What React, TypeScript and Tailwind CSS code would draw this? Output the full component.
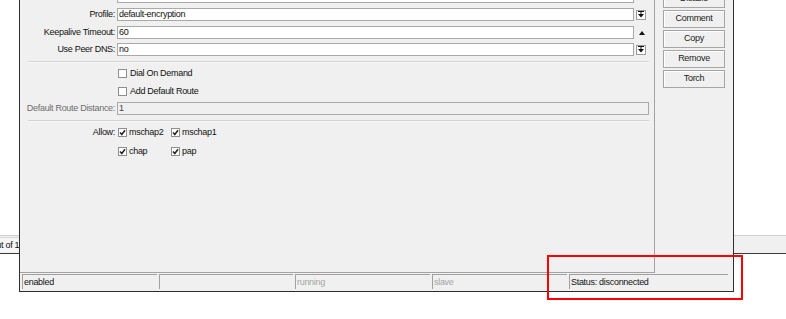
const FONT = "font-['Liberation_Sans',Arial,sans-serif]";

function DropButton() {
  return (
    <div className="ml-[2px] flex h-[10px] w-[10px] items-center justify-center border border-[#9c9c9c] bg-white">
      <svg width="6" height="7" viewBox="0 0 6 7">
        <rect x="0" y="0" width="6" height="1" fill="#111" />
        <rect x="2.5" y="1" width="1" height="2" fill="#111" />
        <path d="M0 3 H6 L3 6.5 Z" fill="#111" />
      </svg>
    </div>
  );
}

function UpArrow() {
  return (
    <div className="ml-[5px] flex h-[10px] w-[6px] items-center">
      <svg width="6" height="4" viewBox="0 0 6 4">
        <path d="M0 4 H6 L3 0 Z" fill="#111" />
      </svg>
    </div>
  );
}

function CheckBox({ checked }: { checked?: boolean }) {
  return (
    <div className="flex h-[9px] w-[9px] shrink-0 items-center justify-center border border-[#8e8f8f] bg-white">
      {checked && (
        <svg width="7" height="7" viewBox="0 0 7 7">
          <path d="M1 3.5 L2.8 5.5 L6 1.2" stroke="#222" strokeWidth="1.5" fill="none" />
        </svg>
      )}
    </div>
  );
}

type FieldRowProps = {
  label: string;
  value: string;
  className?: string;
  after?: React.ReactNode;
};

function FieldRow({ label, value, className, after }: FieldRowProps) {
  return (
    <div className={`flex h-[13px] items-center ${className ?? ''}`}>
      <div className="w-[95px] text-right">{label}</div>
      <div className="ml-[2px] flex h-[13px] w-[517px] items-center border border-[#a9a9a9] bg-white px-[1px]">
        {value}
      </div>
      {after}
    </div>
  );
}

function CheckRow({ label, className }: { label: string; className?: string }) {
  return (
    <div className={`flex h-[13px] items-center pl-[98px] ${className ?? ''}`}>
      <CheckBox />
      <span className="ml-[3px]">{label}</span>
    </div>
  );
}

function AllowItem({ label }: { label: string }) {
  return (
    <div className="flex w-[53px] items-center">
      <CheckBox checked />
      <span className="ml-[2px]">{label}</span>
    </div>
  );
}

function Separator({ className }: { className?: string }) {
  return <div className={`ml-[8px] h-[2px] w-[621px] border-t border-[#d3d3d3] bg-[#f9f9f9] ${className ?? ''}`} />;
}

function SideButton({ label }: { label: string }) {
  return (
    <div className="flex h-[18px] w-[62px] items-center justify-center border border-[#a5a5a5] bg-[#f0f0f0] text-[#1b1b1b] shadow-[inset_1px_1px_0_#ffffff]">
      {label}
    </div>
  );
}

function StatusCell({ text, width, dim }: { text?: string; width: string; dim?: boolean }) {
  return (
    <div
      className={`flex h-[15px] items-center border-t border-l border-[#a0a0a0] border-r-[#fafafa] border-b-[#fafafa] pl-[1px] pt-[1px] ${width} ${
        dim ? 'text-[#a6a6a6]' : 'text-[#111]'
      }`}
    >
      {text}
    </div>
  );
}

export default function App() {
  return (
    <div className={`relative h-[319px] w-[786px] overflow-hidden bg-white text-[9px] tracking-[-0.3px] text-[#111] ${FONT}`}>
      {/* status bar of the window behind */}
      <div className="absolute left-0 top-[235px] flex h-[19px] w-[786px] items-center border-t border-b border-t-[#cfcfcf] border-b-[#3a3a3a] bg-[#f0f0f0]">
        <div className="flex h-[15px] w-[24px] items-center justify-end overflow-hidden whitespace-nowrap border-t border-[#dadada] bg-[#f6f6f6] pt-[1px]">
          0 out of 13
        </div>
      </div>

      {/* dialog window */}
      <div className="absolute left-[19px] top-[-19px] flex h-[311px] w-[715px] flex-col border border-[#2e2e2e] bg-[#f0f0f0]">
        <div className="flex h-[291px]">
          <div className="flex h-full w-[635px] flex-col border-r border-b border-[#a3a3a3] pt-[8px]">
            <FieldRow label="" value="" />
            <FieldRow label="Profile:" value="default-encryption" className="mt-[5px]" after={<DropButton />} />
            <FieldRow label="Keepalive Timeout:" value="60" className="mt-[5px]" after={<UpArrow />} />
            <FieldRow label="Use Peer DNS:" value="no" className="mt-[4px]" after={<DropButton />} />
            <Separator className="mt-[5px]" />
            <CheckRow label="Dial On Demand" className="mt-[4px]" />
            <CheckRow label="Add Default Route" className="mt-[5px]" />
            <div className="mt-[4px] flex h-[13px] items-center">
              <div className="w-[95px] text-right text-[#6d6d6d]">Default Route Distance:</div>
              <div className="ml-[2px] flex h-[13px] w-[532px] items-center border border-[#a9a9a9] bg-[#f0f0f0] px-[1px] text-[#444]">
                1
              </div>
            </div>
            <Separator className="mt-[5px]" />
            <div className="mt-[4px] flex h-[13px] items-center">
              <div className="w-[95px] text-right">Allow:</div>
              <div className="ml-[3px] flex">
                <AllowItem label="mschap2" />
                <AllowItem label="mschap1" />
              </div>
            </div>
            <div className="mt-[6px] flex h-[13px] items-center pl-[98px]">
              <AllowItem label="chap" />
              <AllowItem label="pap" />
            </div>
          </div>
          <div className="flex flex-1 flex-col gap-[2px] pl-[8px] pt-[8px]">
            <SideButton label="Disable" />
            <SideButton label="Comment" />
            <SideButton label="Copy" />
            <SideButton label="Remove" />
            <SideButton label="Torch" />
          </div>
        </div>
        <div className="flex h-[18px] gap-[2px] pl-[2px] pt-[1px]">
          <StatusCell text="enabled" width="w-[135px]" />
          <StatusCell width="w-[134px]" />
          <StatusCell text="running" width="w-[135px]" dim />
          <StatusCell text="slave" width="w-[135px]" dim />
          <StatusCell text="Status: disconnected" width="w-[159px]" />
        </div>
      </div>

      {/* red highlight */}
      <div className="absolute left-[547px] top-[255px] h-[45px] w-[196px] border-2 border-[#ff0000]" />
    </div>
  );
}
